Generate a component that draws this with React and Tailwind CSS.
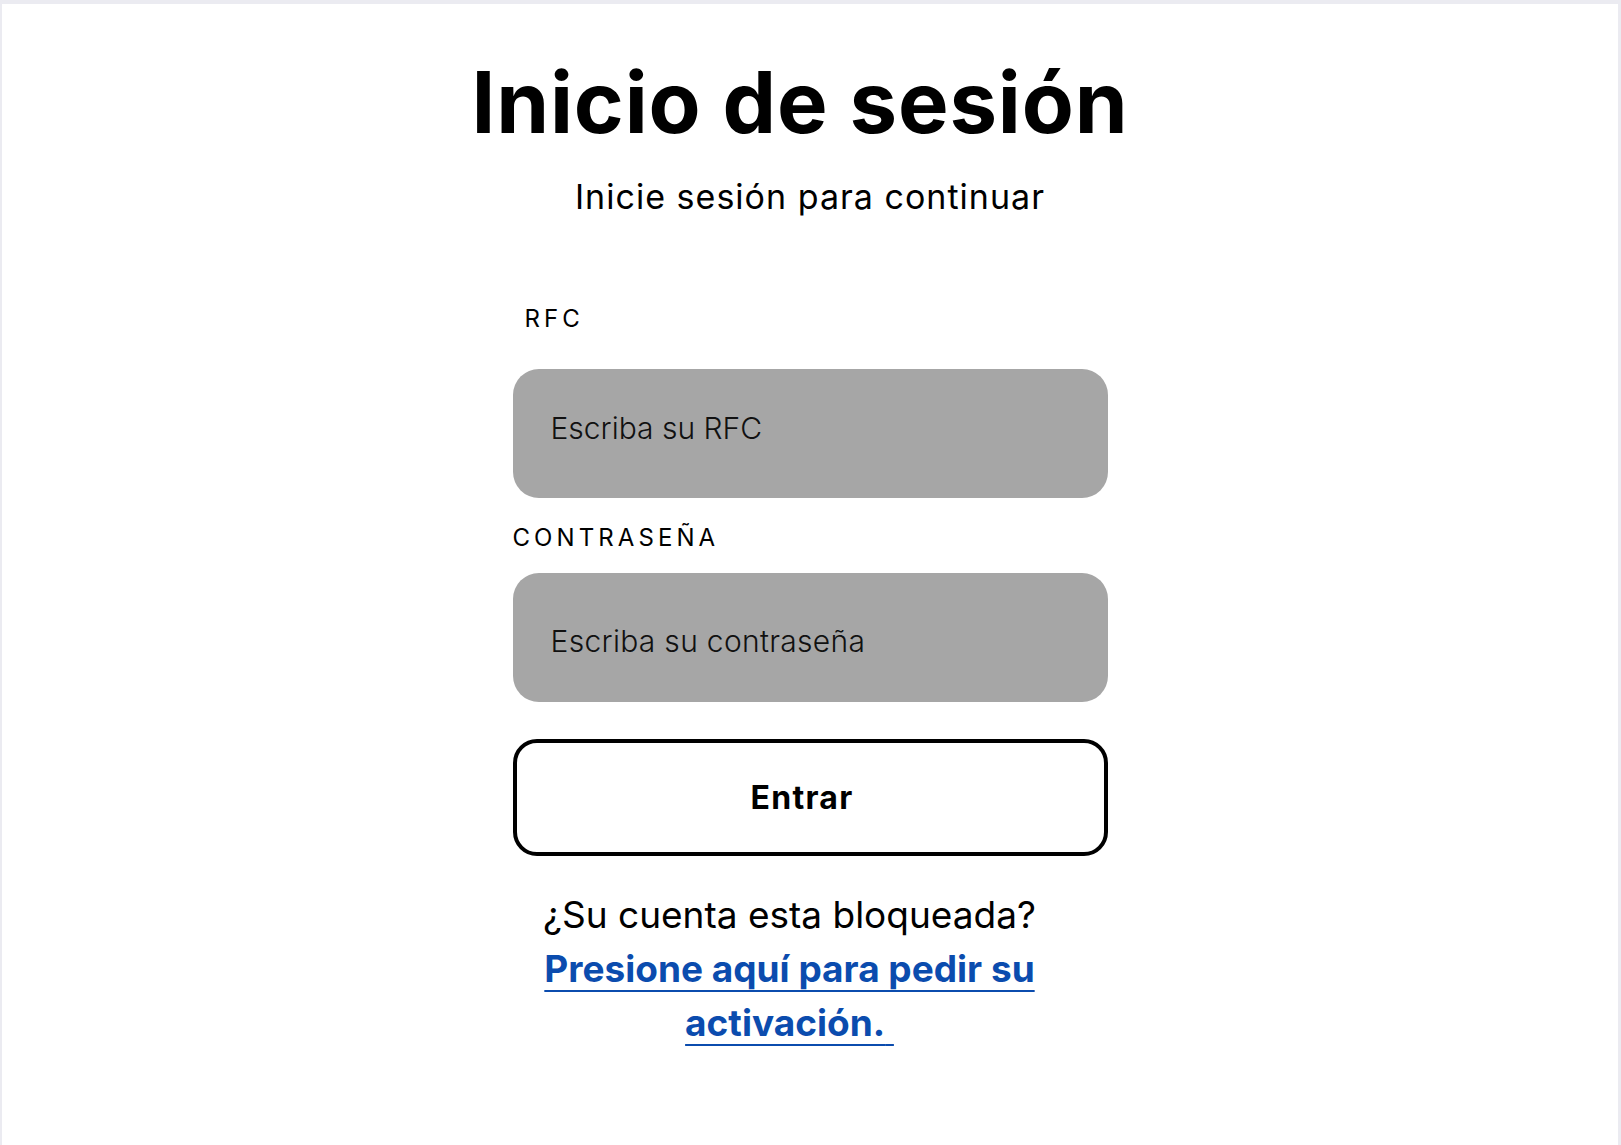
export default function App() {
  return (
    <div className="min-h-screen bg-white border-t-4 border-l-2 border-r-[3px] border-[#ebebf1] font-['Inter','Liberation_Sans',sans-serif] text-black">
      <div className="flex flex-col items-center pt-[56px]">
        <h1 className="text-[85px] leading-[85px] font-bold tracking-[0.01em] pr-[20px]">
          Inicio de sesión
        </h1>
        <p className="mt-[32px] text-[34px] leading-[40px] tracking-[0.03em]">Inicie sesión para continuar</p>

        <form className="mt-[90px] w-[595px] flex flex-col" onSubmit={(e) => e.preventDefault()}>
          <label className="pl-[12px] text-[24px] leading-[24px] tracking-[0.17em]">RFC</label>
          <input
            type="text"
            placeholder="Escriba su RFC"
            className="mt-[38px] h-[129px] w-full rounded-[26px] bg-[#a6a6a6] pl-[38px] pb-[12px] text-[30px] font-light outline-none placeholder:text-[#111]"
          />

          <label className="mt-[28px] text-[24px] leading-[24px] tracking-[0.17em]">CONTRASEÑA</label>
          <input
            type="password"
            placeholder="Escriba su contraseña"
            className="mt-[23px] h-[129px] w-full rounded-[26px] bg-[#a6a6a6] pl-[38px] pt-[6px] text-[30px] font-light tracking-[0.01em] outline-none placeholder:text-[#111]"
          />

          <button
            type="submit"
            className="mt-[37px] h-[117px] w-full rounded-[24px] border-4 border-black bg-white pr-[16px] text-[32px] font-bold tracking-[0.04em]"
          >
            Entrar
          </button>

          <div className="mt-[32px] w-[554px] text-center text-[37px] leading-[54px]">
            <p>¿Su cuenta esta bloqueada?</p>
            <a
              href="#"
              className="font-bold text-[#0b4cae] underline decoration-[1.5px] underline-offset-[8px]"
            >
              Presione aquí para pedir su activación.{"\u00a0"}
            </a>
          </div>
        </form>
      </div>
    </div>
  );
}
